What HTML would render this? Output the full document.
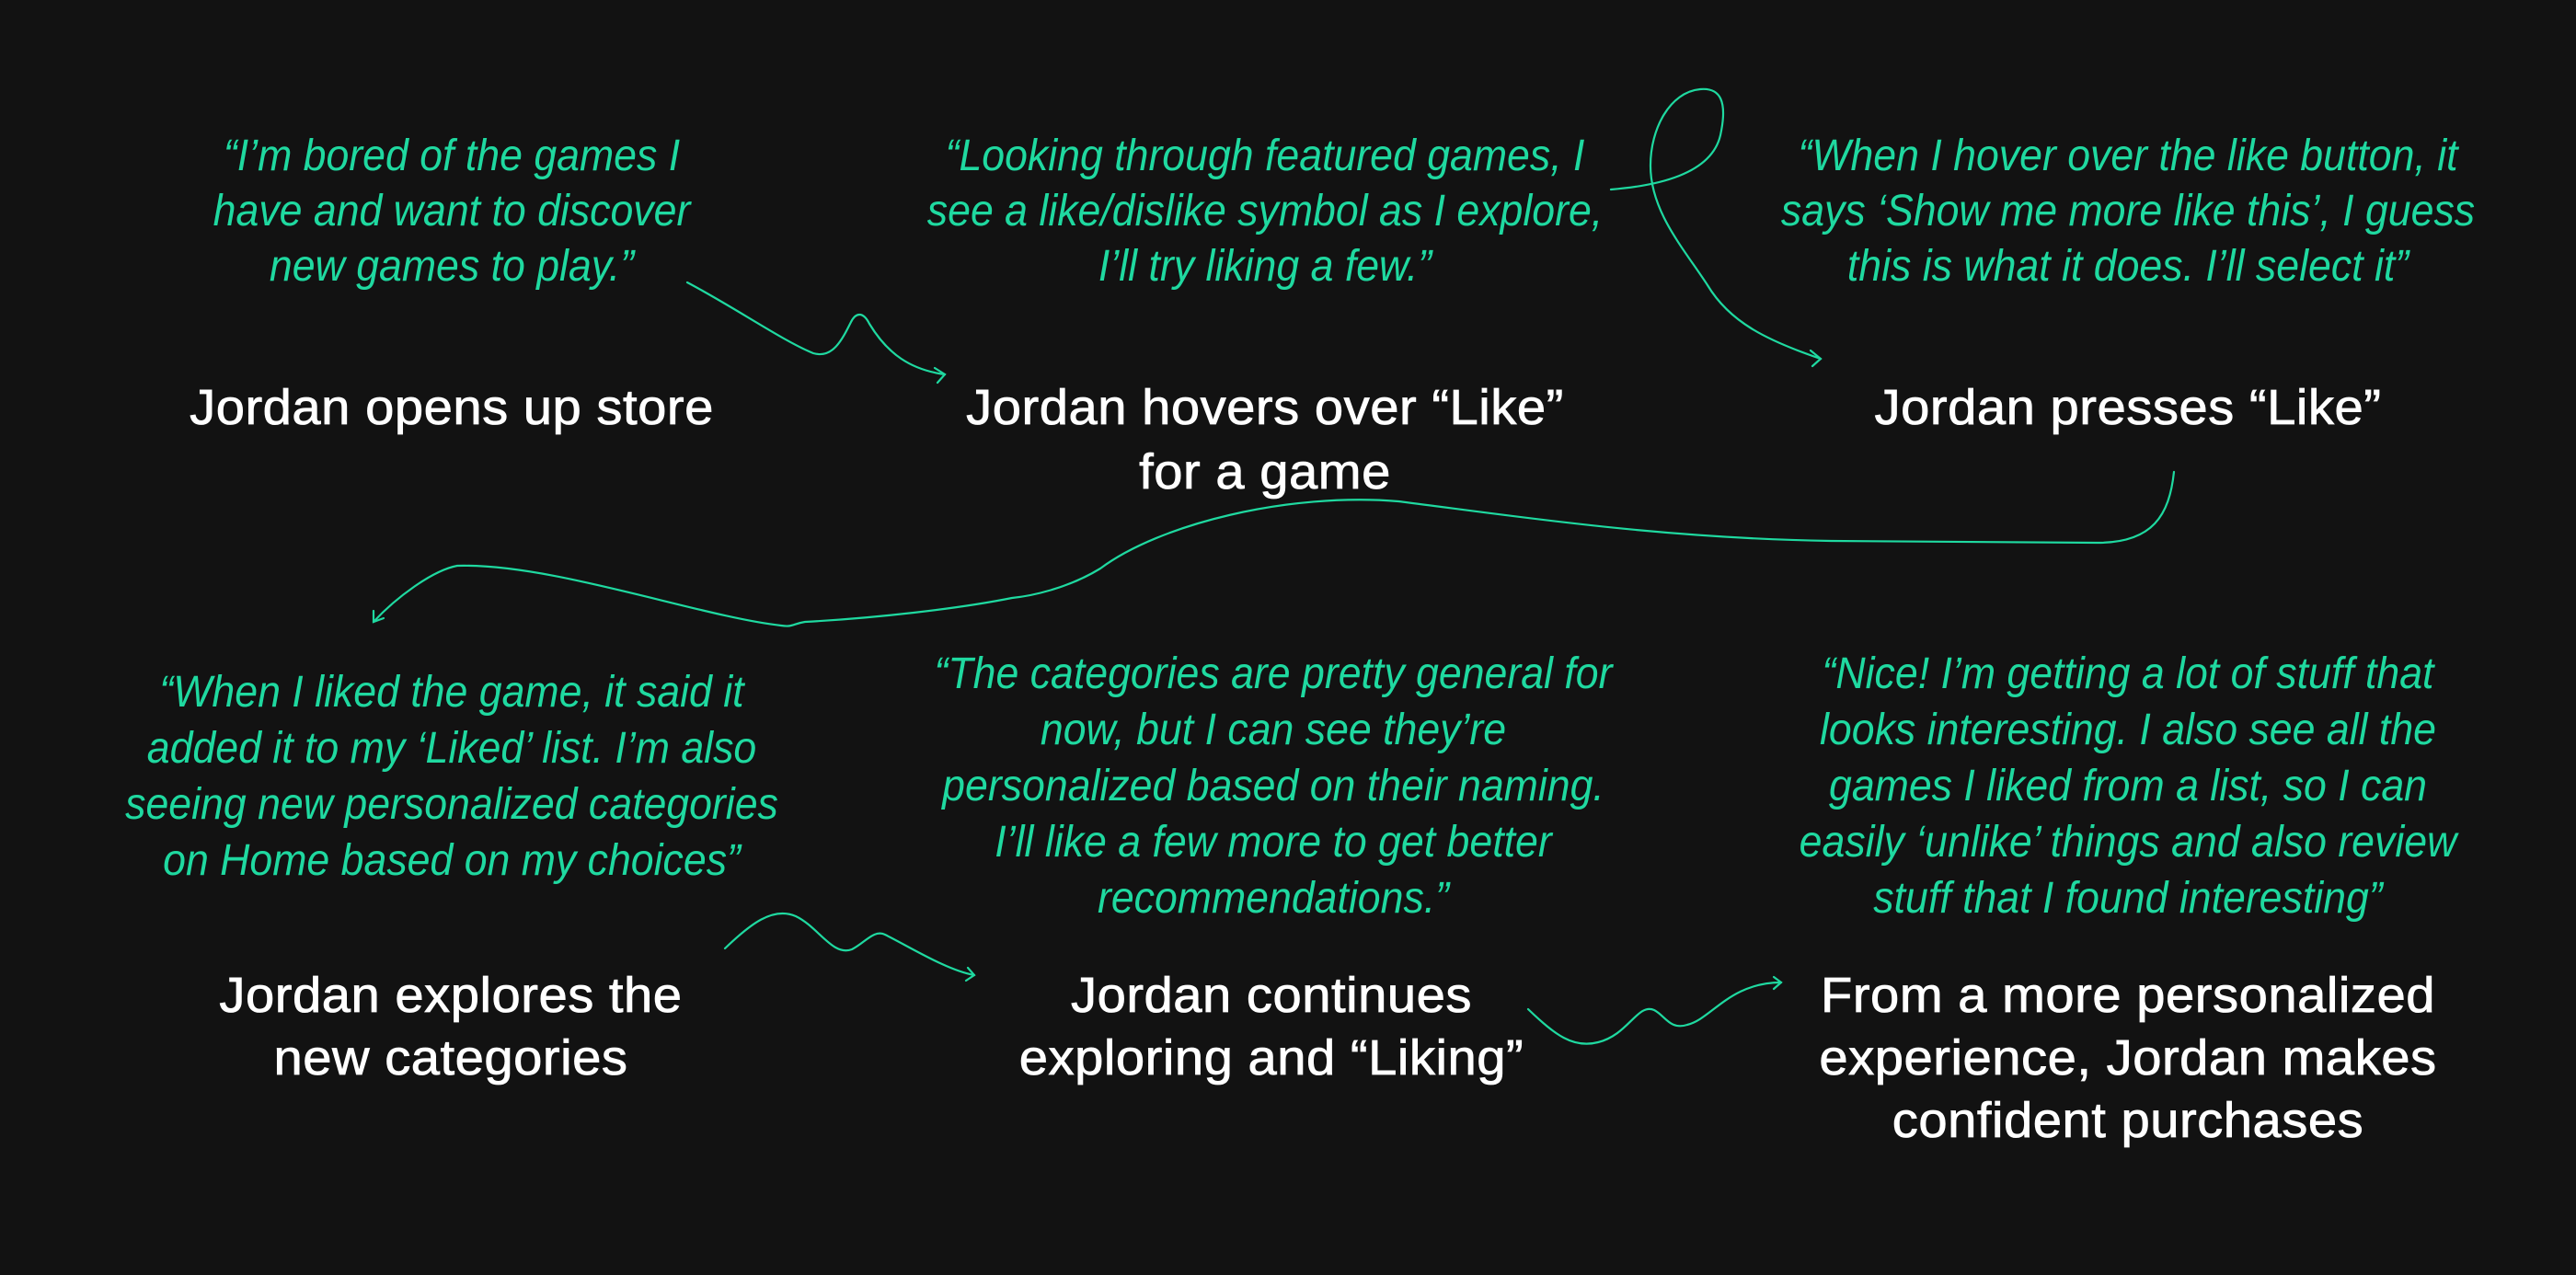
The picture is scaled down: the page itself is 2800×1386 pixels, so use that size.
<!DOCTYPE html>
<html><head><meta charset="utf-8"><style>
html,body{margin:0;padding:0;background:#121212;}
body{width:2800px;height:1386px;position:relative;overflow:hidden;}
.q{position:absolute;width:1200px;margin-left:-600px;text-align:center;color:#1fd9a0;font-family:"Liberation Sans",sans-serif;font-style:italic;font-size:48px;line-height:60px;transform:scaleX(0.93);white-space:nowrap;}
.t{position:absolute;width:1200px;margin-left:-600px;text-align:center;color:#fff;font-family:"Liberation Sans",sans-serif;font-size:54px;line-height:70px;transform:scaleX(1.04);white-space:nowrap;letter-spacing:0.5px;-webkit-text-stroke:0.8px #fff;}
svg{position:absolute;left:0;top:0;}
</style></head><body>
<div class="q" style="left:491px;top:140px">“I’m bored of the games I<br>have and want to discover<br>new games to play.”</div>
<div class="q" style="left:1375px;top:140px">“Looking through featured games, I<br>see a like/dislike symbol as I explore,<br>I’ll try liking a few.”</div>
<div class="q" style="left:2313px;top:140px">“When I hover over the like button, it<br>says ‘Show me more like this’, I guess<br>this is what it does. I’ll select it”</div>
<div class="t" style="left:491px;top:408px">Jordan opens up store</div>
<div class="t" style="left:1375px;top:408px">Jordan hovers over “Like”<br>for a game</div>
<div class="t" style="left:2313px;top:408px">Jordan presses “Like”</div>

<div class="q" style="left:491px;top:722px;line-height:61px">“When I liked the game, it said it<br>added it to my ‘Liked’ list. I’m also<br>seeing new personalized categories<br>on Home based on my choices”</div>
<div class="q" style="left:1384px;top:702px;line-height:61px">“The categories are pretty general for<br>now, but I can see they’re<br>personalized based on their naming.<br>I’ll like a few more to get better<br>recommendations.”</div>
<div class="q" style="left:2313px;top:702px;line-height:61px">“Nice! I’m getting a lot of stuff that<br>looks interesting. I also see all the<br>games I liked from a list, so I can<br>easily ‘unlike’ things and also review<br>stuff that I found interesting”</div>
<div class="t" style="left:490px;top:1048px;line-height:68px">Jordan explores the<br>new categories</div>
<div class="t" style="left:1382px;top:1048px;line-height:68px">Jordan continues<br>exploring and “Liking”</div>
<div class="t" style="left:2313px;top:1048px;line-height:68px">From a more personalized<br>experience, Jordan makes<br>confident purchases</div>

<svg width="2800" height="1386" fill="none" stroke="#1fd9a0" stroke-width="2.2" stroke-linecap="round">
<path d="M747,307 C800,335 850,370 884,384 C905,390 915,370 925,350 C930,340 938,338 945,352 C965,385 990,402 1027,407"/>
<path d="M1016,400 L1027,407 L1019,416"/>
<path d="M1751,206 C1800,202 1860,190 1870,147 C1878,110 1870,95 1848,97 C1815,100 1794,140 1794,180 C1794,230 1830,270 1856,310 C1880,350 1920,370 1979,390"/>
<path d="M1968,381 L1979,390 L1970,398"/>
<path d="M2363,513 C2358,560 2340,590 2280,590 L1990,588 C1800,585 1640,560 1520,545 C1400,535 1260,570 1196,618 C1160,640 1120,648 1100,650 C1040,662 950,672 875,676 C862,678 862,682 849,680 C760,670 600,612 497,615 C470,620 430,650 406,676"/>
<path d="M406,664 L406,676 L417,672"/>
<path d="M788,1031 C815,1005 840,985 865,996 C890,1008 905,1040 926,1032 C940,1025 950,1010 962,1016 C990,1030 1030,1055 1059,1060"/>
<path d="M1052,1052 L1059,1060 L1050,1066"/>
<path d="M1661,1097 C1690,1125 1710,1140 1737,1133 C1770,1125 1780,1090 1798,1098 C1810,1104 1815,1120 1834,1114 C1860,1108 1880,1068 1936,1068"/>
<path d="M1928,1062 L1936,1068 L1928,1075"/>
</svg>
</body></html>
